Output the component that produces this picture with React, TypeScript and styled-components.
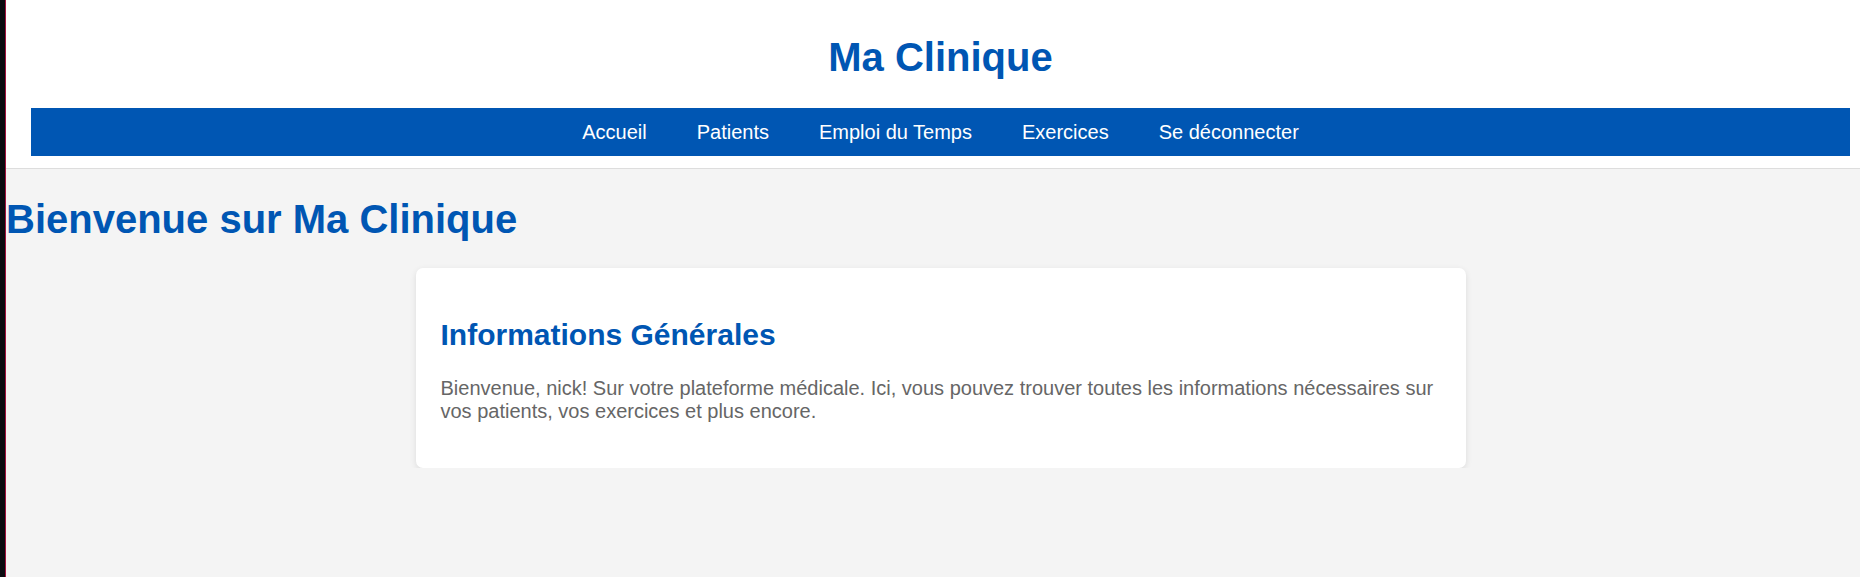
import React from "react";
import styled, { createGlobalStyle } from "styled-components";

const GlobalStyle = createGlobalStyle`
  html, body {
    margin: 0;
    padding: 0;
    overflow: hidden;
  }
  body {
    min-height: 100vh;
    box-sizing: border-box;
    background: #f4f4f4;
    border-left: 5px solid #0b0b10;
    font-family: "Liberation Sans", Arial, sans-serif;
  }
`;

const Page = styled.div`
  width: 1869px;
  min-height: 100vh;
  border-left: 1px solid #a3133f;
  background: #f4f4f4;
`;

const Header = styled.header`
  background: #ffffff;
  padding: 35px 25px 12px;
  border-bottom: 1px solid #dddddd;
  text-align: center;
`;

const SiteTitle = styled.h1`
  margin: 0 0 28px;
  font-size: 40px;
  font-weight: 700;
  color: #0056b3;
`;

const Nav = styled.nav`
  display: flex;
  justify-content: center;
  gap: 50px;
  background: #0056b3;
  padding: 12.5px 0;
`;

const NavLink = styled.a`
  color: #ffffff;
  font-size: 20px;
  line-height: 23px;
  text-decoration: none;
  cursor: pointer;
`;

const Main = styled.main`
  padding: 0;
  overflow: hidden;
`;

const PageHeading = styled.h1`
  margin: 28px 0 26px;
  font-size: 40px;
  font-weight: 700;
  color: #0056b3;
`;

const Card = styled.section`
  box-sizing: border-box;
  max-width: 1050px;
  margin: 0 auto;
  padding: 25px;
  background: #ffffff;
  border-radius: 7px;
  box-shadow: 0 2px 6px rgba(0, 0, 0, 0.1);
`;

const CardTitle = styled.h2`
  margin: 25px 0;
  font-size: 30px;
  font-weight: 700;
  color: #0056b3;
`;

const CardText = styled.p`
  margin: 20px 0;
  font-size: 20px;
  line-height: 23px;
  color: #666666;
`;

const links = ["Accueil", "Patients", "Emploi du Temps", "Exercices", "Se déconnecter"];

export default function App() {
  return (
    <>
      <GlobalStyle />
      <Page>
        <Header>
          <SiteTitle>Ma Clinique</SiteTitle>
          <Nav>
            {links.map((l) => (
              <NavLink key={l}>{l}</NavLink>
            ))}
          </Nav>
        </Header>
        <Main>
          <PageHeading>Bienvenue sur Ma Clinique</PageHeading>
          <Card>
            <CardTitle>Informations Générales</CardTitle>
            <CardText>
              Bienvenue, nick! Sur votre plateforme médicale. Ici, vous pouvez trouver toutes les
              informations nécessaires sur vos patients, vos exercices et plus encore.
            </CardText>
          </Card>
        </Main>
      </Page>
    </>
  );
}
